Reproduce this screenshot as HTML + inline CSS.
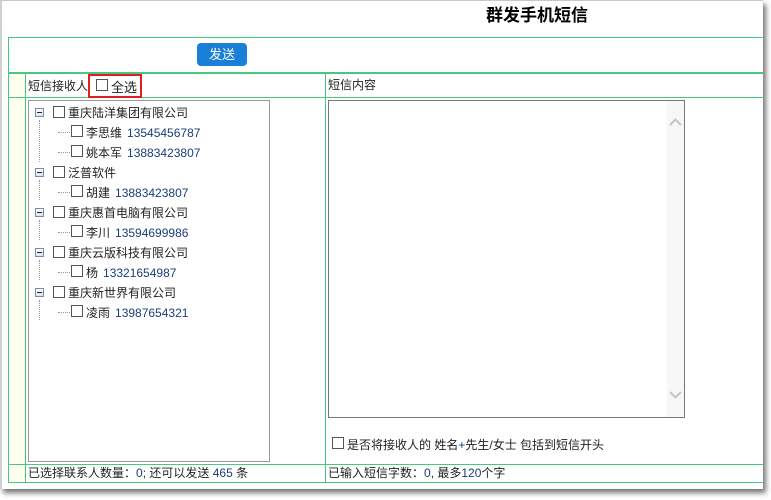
<!DOCTYPE html>
<html><head><meta charset="utf-8"><style>
*{margin:0;padding:0;box-sizing:border-box}
body{width:771px;height:500px;background:#fff;position:relative;overflow:hidden;font-family:"Liberation Sans","Noto Sans CJK SC",sans-serif;font-size:12px;color:#222}
.a{position:absolute}
.win{left:0;top:0;width:763px;height:489px;background:#fff;border-top:1px solid #c8c8c8;border-left:2px solid #d0d0d0;box-shadow:3px 4px 5px #777}
.g{background:#45c97e}
.cb{position:absolute;width:12px;height:12px;border:1px solid #555;background:#fff}
.t{position:absolute;white-space:nowrap;line-height:14px}
.n{color:#1a3d78;margin-left:5px}
.minus{position:absolute;width:9px;height:9px;border:1px solid #7a8aa8;background:linear-gradient(#fff,#dde4ee)}
.minus:after{content:"";position:absolute;left:1px;top:3px;width:5px;height:1px;background:#223}
.vd{position:absolute;width:1px;border-left:1px dotted #999}
.hd{position:absolute;height:1px;border-top:1px dotted #999}
</style></head><body>
<div class="a win"></div>
<div class="t" style="left:486px;top:7px;font-size:17px;font-weight:bold;line-height:18px;color:#000">群发手机短信</div>
<div class="a" style="left:9px;top:73px;width:16px;height:409px;background:#fffff0"></div>
<div class="a g" style="left:8px;top:37px;width:755px;height:1px"></div>
<div class="a g" style="left:8px;top:72px;width:755px;height:2px"></div>
<div class="a g" style="left:8px;top:97px;width:755px;height:1px"></div>
<div class="a g" style="left:8px;top:464px;width:755px;height:1px"></div>
<div class="a g" style="left:8px;top:482px;width:755px;height:1px"></div>
<div class="a g" style="left:8px;top:37px;width:1px;height:446px"></div>
<div class="a g" style="left:25px;top:73px;width:1px;height:410px"></div>
<div class="a g" style="left:325px;top:73px;width:1px;height:410px"></div>
<div class="a" style="left:197px;top:43px;width:50px;height:23px;background:#1a7fd6;border-radius:4px;color:#fff;font-size:13px;text-align:center;line-height:23px">发送</div>
<div class="t" style="left:28px;top:79px;font-size:12px">短信接收人</div>
<div class="a" style="left:88px;top:74px;width:54px;height:24px;border:2px solid #e02020"></div>
<div class="cb" style="left:96px;top:79px"></div>
<div class="t" style="left:111px;top:81px;font-size:13px">全选</div>
<div class="t" style="left:328px;top:78px;font-size:12px">短信内容</div>
<div class="a" style="left:28px;top:100px;width:242px;height:362px;border:1px solid #999"></div>
<div class="a" style="left:328px;top:100px;width:357px;height:318px;border:1px solid #777"></div>
<div class="a" style="left:667px;top:101px;width:17px;height:316px;background:#f7f7f7"></div>
<svg class="a" style="left:669px;top:118px" width="13" height="8"><path d="M1 7L6.5 1.5L12 7" fill="none" stroke="#c4c4c4" stroke-width="2"/></svg>
<svg class="a" style="left:669px;top:391px" width="13" height="8"><path d="M1 1L6.5 6.5L12 1" fill="none" stroke="#c4c4c4" stroke-width="2"/></svg>
<div class="minus" style="left:35px;top:108px"></div><div class="cb" style="left:53px;top:106px"></div><div class="t" style="left:68px;top:106px">重庆陆洋集团有限公司</div>
<div class="vd" style="left:39px;top:120px;height:42px"></div>
<div class="hd" style="left:58px;top:132px;width:12px"></div><div class="cb" style="left:71px;top:125px"></div><div class="t" style="left:86px;top:126px">李思维<span class="n">13545456787</span></div>
<div class="hd" style="left:58px;top:152px;width:12px"></div><div class="cb" style="left:71px;top:145px"></div><div class="t" style="left:86px;top:146px">姚本军<span class="n">13883423807</span></div>
<div class="minus" style="left:35px;top:168px"></div><div class="cb" style="left:53px;top:166px"></div><div class="t" style="left:68px;top:166px">泛普软件</div>
<div class="vd" style="left:39px;top:180px;height:20px"></div>
<div class="hd" style="left:58px;top:192px;width:12px"></div><div class="cb" style="left:71px;top:185px"></div><div class="t" style="left:86px;top:186px">胡建<span class="n">13883423807</span></div>
<div class="minus" style="left:35px;top:208px"></div><div class="cb" style="left:53px;top:206px"></div><div class="t" style="left:68px;top:206px">重庆惠首电脑有限公司</div>
<div class="vd" style="left:39px;top:220px;height:20px"></div>
<div class="hd" style="left:58px;top:232px;width:12px"></div><div class="cb" style="left:71px;top:225px"></div><div class="t" style="left:86px;top:226px">李川<span class="n">13594699986</span></div>
<div class="minus" style="left:35px;top:248px"></div><div class="cb" style="left:53px;top:246px"></div><div class="t" style="left:68px;top:246px">重庆云版科技有限公司</div>
<div class="vd" style="left:39px;top:260px;height:20px"></div>
<div class="hd" style="left:58px;top:272px;width:12px"></div><div class="cb" style="left:71px;top:265px"></div><div class="t" style="left:86px;top:266px">杨<span class="n">13321654987</span></div>
<div class="minus" style="left:35px;top:288px"></div><div class="cb" style="left:53px;top:286px"></div><div class="t" style="left:68px;top:286px">重庆新世界有限公司</div>
<div class="vd" style="left:39px;top:300px;height:20px"></div>
<div class="hd" style="left:58px;top:312px;width:12px"></div><div class="cb" style="left:71px;top:305px"></div><div class="t" style="left:86px;top:306px">凌雨<span class="n">13987654321</span></div>
<div class="cb" style="left:332px;top:437px"></div>
<div class="t" style="left:347px;top:438px">是否将接收人的 姓名<span style="color:#1a3d78">+</span>先生/女士 包括到短信开头</div>
<div class="t" style="left:28px;top:466px">已选择联系人数量：<span style="color:#1a3d78">0</span>; 还可以发送 <span style="color:#1a3d78">465</span> 条</div>
<div class="t" style="left:328px;top:466px">已输入短信字数：<span style="color:#1a3d78">0</span>, 最多<span style="color:#1a3d78">120</span>个字</div>
</body></html>
